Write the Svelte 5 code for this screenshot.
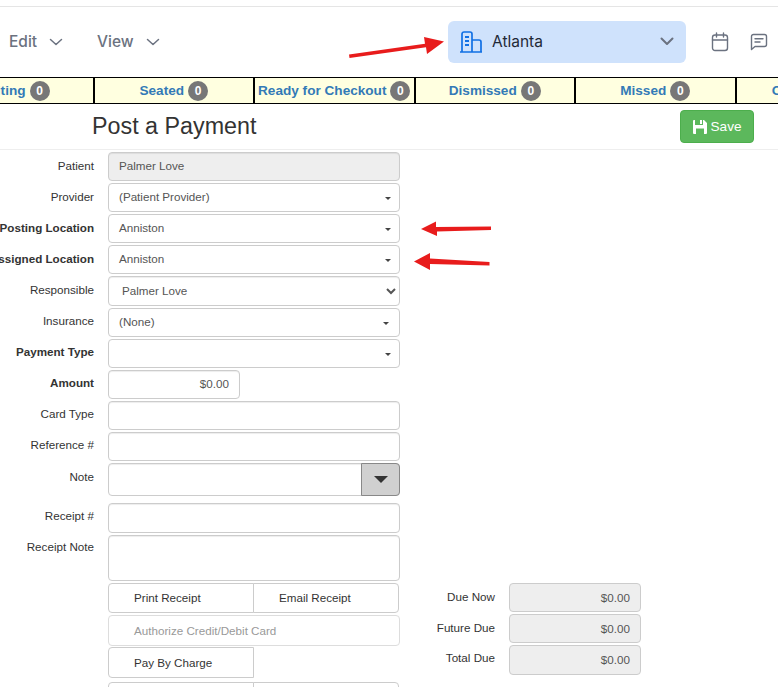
<script>
  const STATUSES = ['Waiting', 'Seated', 'Ready for Checkout', 'Dismissed', 'Missed', 'Cancelled']
  const DUES = [
    { label: 'Due Now', h: 29 },
    { label: 'Future Due', h: 29 },
    { label: 'Total Due', h: 30 }
  ]
</script>

<div class="page">
  <header class="topbar">
    <div class="menu">
      <span class="menu-item edit">Edit
        <svg width="14" height="8" viewBox="0 0 14 8"><path d="M1.5 1.5 7 6.5l5.5-5" fill="none" stroke="#6b7280" stroke-width="1.5" stroke-linecap="round" stroke-linejoin="round"/></svg>
      </span>
      <span class="menu-item view">View
        <svg width="14" height="8" viewBox="0 0 14 8"><path d="M1.5 1.5 7 6.5l5.5-5" fill="none" stroke="#6b7280" stroke-width="1.5" stroke-linecap="round" stroke-linejoin="round"/></svg>
      </span>
    </div>
    <div class="location">
      <svg width="24" height="22" viewBox="0 0 24 22" fill="none" stroke="#1170e4" stroke-width="1.7">
        <path d="M1 21h22M3 21V3a2 2 0 0 1 2-2h6a2 2 0 0 1 2 2v18M13 9h7a2 2 0 0 1 2 2v10" />
        <path d="M6 6h4M6 10h4M6 14h4" stroke-width="1.8" />
      </svg>
      <span class="loc-name">Atlanta</span>
      <svg class="loc-chev" width="14" height="9" viewBox="0 0 14 9"><path d="M1.5 1.5 7 7l5.5-5.5" fill="none" stroke="#6b7280" stroke-width="2" stroke-linecap="round" stroke-linejoin="round"/></svg>
    </div>
    <svg class="cal" width="18" height="20" viewBox="0 0 18 20" fill="none" stroke="#6b7280" stroke-width="1.4">
      <rect x="1.500" y="3" width="15" height="15.500" rx="2.500" />
      <path d="M1.500 8h15M5.500 1v4M12.500 1v4" stroke-linecap="round" />
    </svg>
    <svg class="chat" width="18" height="18" viewBox="0 0 18 18" fill="none" stroke="#6b7280" stroke-width="1.4" stroke-linejoin="round">
      <path d="M1.500 16.500V3.500a2 2 0 0 1 2-2h11a2 2 0 0 1 2 2v8a2 2 0 0 1-2 2H5z" />
      <path d="M5 5.700h8M5 9h5" stroke-linecap="round" />
    </svg>
  </header>

  <nav class="statusbar">
    {#each STATUSES as status}
      <div class="status">
        <span class="status-name">{status}</span>
        <span class="badge">0</span>
      </div>
    {/each}
  </nav>

  <div class="title-row">
    <h1>Post a Payment</h1>
    <button class="save">
      <svg width="14" height="14" viewBox="0 0 14 14"><path fill="#fff" fill-rule="evenodd" d="M0 1a1 1 0 0 1 1-1h1v5h8V0h1l3 3v10a1 1 0 0 1-1 1H1a1 1 0 0 1-1-1zM3 14h8V8.500H3zM7 0h2v4H7z"/></svg>
      Save
    </button>
  </div>

  <form class="form">
    <div class="row">
      <span class="label">Patient</span>
      <div class="field disabled">Palmer Love</div>
    </div>
    <div class="row">
      <span class="label">Provider</span>
      <div class="field caret">(Patient Provider)</div>
    </div>
    <div class="row">
      <span class="label bold">Posting Location</span>
      <div class="field caret">Anniston</div>
    </div>
    <div class="row">
      <span class="label bold">Assigned Location</span>
      <div class="field caret">Anniston</div>
    </div>
    <div class="row">
      <span class="label">Responsible</span>
      <select class="field native"><option>Palmer Love</option></select>
    </div>
    <div class="row tight">
      <span class="label">Insurance</span>
      <div class="field caret insurance">(None)</div>
    </div>
    <div class="row tight">
      <span class="label bold">Payment Type</span>
      <div class="field caret"></div>
    </div>
    <div class="row tight">
      <span class="label bold">Amount</span>
      <div class="field amount">$0.00</div>
    </div>
    <div class="row tight">
      <span class="label">Card Type</span>
      <div class="field"></div>
    </div>
    <div class="row tight">
      <span class="label">Reference #</span>
      <div class="field"></div>
    </div>
    <div class="row note-row">
      <span class="label">Note</span>
      <div class="field note">
        <span class="note-btn"><i></i></span>
      </div>
    </div>
    <div class="row tight">
      <span class="label">Receipt #</span>
      <div class="field receipt-no"></div>
    </div>
    <div class="row receipt-note">
      <span class="label">Receipt Note</span>
      <div class="field textarea"></div>
    </div>

    <div class="bottom">
      <div class="actions">
        <div class="btn-group receipt">
          <span class="btn">Print Receipt</span>
          <span class="btn email">Email Receipt</span>
        </div>
        <div class="btn authorize">Authorize Credit/Debit Card</div>
        <div class="btn pay">Pay By Charge</div>
        <div class="btn-group more">
          <span class="btn"></span>
          <span class="btn"></span>
        </div>
      </div>
      <div class="dues">
        {#each DUES as due}
          <div class="due">
            <span class="due-label">{due.label}</span>
            <div class="due-value" style="height: {due.h}px">$0.00</div>
          </div>
        {/each}
      </div>
    </div>
  </form>

  <svg class="arrows" width="778" height="687" viewBox="0 0 778 687">
    <g fill="#e81c1c">
      <path d="M349 54.500 425 43.700 424 37 444 41.500 427 54 426 47.200 349.500 58z" />
      <path d="M491 226.500V230l-54 1.500V236l-16-7 15-7.500v5.500z" />
      <path d="M489.500 262V265.500L430 264v6l-16-8.500 16-8.500v5.500z" />
    </g>
  </svg>
</div>

<style>
  :global(body) {
    margin: 0;
    background: #fff;
    overflow: hidden;
  }

  .page {
    position: relative;
    width: 778px;
    height: 687px;
    overflow: hidden;
    font-family: "Liberation Sans", Arial, sans-serif;
    font-size: 11.65px;
    color: #333;
  }

  .topbar {
    box-sizing: border-box;
    height: 71px;
    margin-top: 6px;
    border-top: 1px solid #e5e5e5;
    display: flex;
    align-items: center;
    padding-bottom: 1px;
    font-family: Inter, sans-serif;
  }

  .menu {
    display: flex;
    width: 448px;
    padding-left: 9px;
    box-sizing: border-box;
  }

  .menu-item {
    display: flex;
    align-items: center;
    gap: 12px;
    font-size: 15.5px;
    font-weight: 500;
    color: #6b7280;
  }

  .menu-item.edit {
    width: 88px;
  }

  .location {
    width: 238px;
    height: 42px;
    box-sizing: border-box;
    padding: 0 12px 0 11px;
    background: #cfe2fc;
    border-radius: 6px;
    display: flex;
    align-items: center;
  }

  .loc-name {
    margin-left: 9px;
    font-size: 15.5px;
    font-weight: 400;
    color: #1f2937;
  }

  .loc-chev {
    margin-left: auto;
  }

  .cal {
    margin-left: 25px;
  }

  .chat {
    margin-left: 21px;
  }

  .statusbar {
    display: flex;
    height: 27px;
    box-sizing: border-box;
    margin-left: -66px;
    width: 1000px;
    border-top: 1px solid #000;
    border-bottom: 1px solid #000;
    background: #ffffe0;
  }

  .status {
    flex: 0 0 160.5px;
    box-sizing: border-box;
    border-right: 2px solid #000;
    display: flex;
    align-items: center;
    justify-content: center;
    gap: 4px;
    font-size: 13.6px;
    font-weight: 700;
    color: #337ab7;
    white-space: nowrap;
  }

  .badge {
    min-width: 20px;
    height: 20px;
    box-sizing: border-box;
    border-radius: 10px;
    background: #777;
    color: #fff;
    font-size: 12px;
    line-height: 20px;
    text-align: center;
  }

  .title-row {
    box-sizing: border-box;
    height: 46px;
    border-bottom: 1px solid #eee;
    padding: 6px 24px 0 92px;
    display: flex;
    justify-content: space-between;
    align-items: flex-start;
  }

  h1 {
    margin: 3px 0 0;
    font-size: 23.3px;
    font-weight: 400;
    line-height: 26px;
    color: #333;
  }

  .save {
    width: 74px;
    height: 33px;
    padding: 0;
    border: 1px solid #4cae4c;
    border-radius: 4px;
    background: #5cb85c;
    color: #fff;
    font-family: inherit;
    font-size: 13.6px;
    display: flex;
    align-items: center;
    justify-content: center;
    gap: 4px;
  }

  .form {
    padding-top: 2px;
  }

  .row {
    display: flex;
    gap: 14px;
    margin-bottom: 2px;
  }

  .label {
    flex: 0 0 94px;
    min-width: 0;
    display: flex;
    justify-content: flex-end;
    padding-top: 7px;
    line-height: 14px;
    white-space: nowrap;
  }

  .tight .label {
    padding-top: 6px;
  }

  .receipt-note .label {
    padding-top: 5px;
  }

  .bold {
    font-weight: 700;
  }

  .field {
    position: relative;
    box-sizing: border-box;
    width: 292px;
    height: 29px;
    padding: 0 10px;
    border: 1px solid #ccc;
    border-radius: 4px;
    background: #fff;
    color: #555;
    font-family: inherit;
    font-size: inherit;
    line-height: 26px;
    box-shadow: inset 0 1px 1px rgba(0, 0, 0, 0.075);
  }

  .disabled {
    background: #eee;
  }

  .caret {
    box-shadow: none;
  }

  .caret::after {
    content: "";
    position: absolute;
    top: 13px;
    right: 8.5px;
    border-top: 3px solid #444;
    border-left: 3px solid transparent;
    border-right: 3px solid transparent;
  }

  .insurance {
    line-height: 25px;
  }

  .insurance::after {
    right: 10.5px;
  }

  .native {
    height: 30px;
    line-height: normal;
    padding: 0 0 2px 9px;
  }

  .amount {
    width: 132px;
    text-align: right;
  }

  .note-row {
    margin-bottom: 7px;
  }

  .note {
    height: 33px;
  }

  .note-btn {
    position: absolute;
    top: -1px;
    right: -1px;
    width: 39px;
    height: 33px;
    box-sizing: border-box;
    border: 1px solid #888;
    border-radius: 0 4px 4px 0;
    background: #d0d0d0;
    display: flex;
    align-items: center;
    justify-content: center;
  }

  .note-btn i {
    border-top: 7px solid #333;
    border-left: 7px solid transparent;
    border-right: 7px solid transparent;
  }

  .receipt-no {
    height: 30px;
  }

  .textarea {
    height: 46px;
  }

  .bottom {
    display: flex;
    margin-left: 108px;
  }

  .actions {
    flex: 0 0 292px;
    display: flex;
    flex-direction: column;
  }

  .btn {
    display: block;
    box-sizing: border-box;
    border: 1px solid #ccc;
    border-radius: 4px;
    padding-left: 25px;
    color: #333;
    line-height: 28px;
    background: #fff;
  }

  .btn-group {
    display: flex;
    width: 291px;
    height: 30px;
  }

  .btn-group .btn {
    flex: 1;
    border-radius: 4px 0 0 4px;
  }

  .btn-group .btn + .btn {
    margin-left: -1px;
    border-radius: 0 4px 4px 0;
  }

  .authorize {
    height: 31px;
    margin-top: 2px;
    border-color: #ddd;
    color: #999;
    line-height: 29px;
  }

  .pay {
    width: 146px;
    height: 31px;
    margin-top: 1px;
    border-radius: 4px 0 0 4px;
    line-height: 29px;
  }

  .more {
    margin-top: 4px;
  }

  .dues {
    display: flex;
    flex-direction: column;
    gap: 2px;
  }

  .due {
    display: flex;
    align-items: flex-start;
  }

  .due-label {
    width: 95px;
    padding-top: 7px;
    line-height: 14px;
    text-align: right;
  }

  .due:nth-child(3) .due-label {
    padding-top: 6px;
  }

  .due-value {
    box-sizing: border-box;
    width: 132px;
    margin-left: 14px;
    padding-right: 10px;
    border: 1px solid #ccc;
    border-radius: 4px;
    background: #eee;
    color: #555;
    line-height: 28px;
    text-align: right;
  }

  .arrows {
    position: absolute;
    top: 0;
    left: 0;
    pointer-events: none;
  }
</style>
